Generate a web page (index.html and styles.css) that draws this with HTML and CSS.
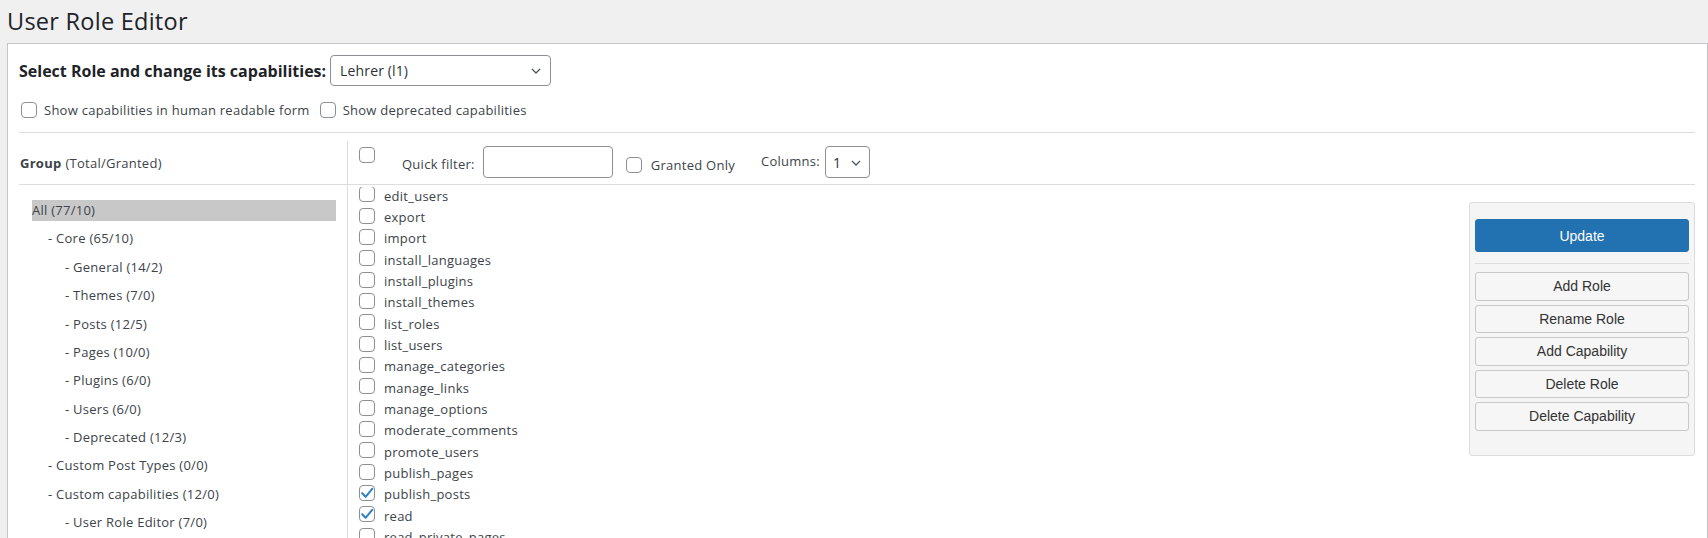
FILE: index.html
```html
<!DOCTYPE html>
<html lang="en">
<head>
<meta charset="utf-8">
<title>User Role Editor</title>
<link rel="stylesheet" href="styles.css">
</head>
<body>
<div class="wrap">
  <h1 class="page-title">User Role Editor</h1>
  <div class="box">
    <div class="role-row">
      <span class="role-label">Select Role and change its capabilities:</span>
      <select class="wp-select role-select"><option>Lehrer (l1)</option></select>
    </div>
    <div class="opts">
      <label class="opt"><input type="checkbox" class="cb"><span>Show capabilities in human readable form</span></label>
      <label class="opt"><input type="checkbox" class="cb"><span>Show deprecated capabilities</span></label>
    </div>
    <div class="sep"></div>
    <div class="editor">
      <div class="groups-head"><b>Group</b> (Total/Granted)</div>
      <div class="caps-head">
        <input type="checkbox" class="cb head-cb">
        <span class="qf-label">Quick filter:</span>
        <input type="text" class="qf-input">
        <input type="checkbox" class="cb granted-cb">
        <span class="granted-label">Granted Only</span>
        <span class="cols-label">Columns:</span>
        <select class="wp-select cols-select"><option>1</option></select>
      </div>
      <div class="groups">
        <div class="tree-item selected">All (77/10)</div>
        <div class="tree-item lvl1">- Core (65/10)</div>
        <div class="tree-item lvl2">- General (14/2)</div>
        <div class="tree-item lvl2">- Themes (7/0)</div>
        <div class="tree-item lvl2">- Posts (12/5)</div>
        <div class="tree-item lvl2">- Pages (10/0)</div>
        <div class="tree-item lvl2">- Plugins (6/0)</div>
        <div class="tree-item lvl2">- Users (6/0)</div>
        <div class="tree-item lvl2">- Deprecated (12/3)</div>
        <div class="tree-item lvl1">- Custom Post Types (0/0)</div>
        <div class="tree-item lvl1">- Custom capabilities (12/0)</div>
        <div class="tree-item lvl2">- User Role Editor (7/0)</div>
      </div>
      <div class="caps-body">
        <div class="caps-list">
          <div class="caps-inner">
            <label class="cap"><input type="checkbox" class="cb"><span>edit_users</span></label>
            <label class="cap"><input type="checkbox" class="cb"><span>export</span></label>
            <label class="cap"><input type="checkbox" class="cb"><span>import</span></label>
            <label class="cap"><input type="checkbox" class="cb"><span>install_languages</span></label>
            <label class="cap"><input type="checkbox" class="cb"><span>install_plugins</span></label>
            <label class="cap"><input type="checkbox" class="cb"><span>install_themes</span></label>
            <label class="cap"><input type="checkbox" class="cb"><span>list_roles</span></label>
            <label class="cap"><input type="checkbox" class="cb"><span>list_users</span></label>
            <label class="cap"><input type="checkbox" class="cb"><span>manage_categories</span></label>
            <label class="cap"><input type="checkbox" class="cb"><span>manage_links</span></label>
            <label class="cap"><input type="checkbox" class="cb"><span>manage_options</span></label>
            <label class="cap"><input type="checkbox" class="cb"><span>moderate_comments</span></label>
            <label class="cap"><input type="checkbox" class="cb"><span>promote_users</span></label>
            <label class="cap"><input type="checkbox" class="cb"><span>publish_pages</span></label>
            <label class="cap"><input type="checkbox" class="cb" checked><span>publish_posts</span></label>
            <label class="cap"><input type="checkbox" class="cb" checked><span>read</span></label>
            <label class="cap"><input type="checkbox" class="cb"><span>read_private_pages</span></label>
          </div>
        </div>
        <div class="side-panel">
          <button class="btn btn-primary">Update</button>
          <div class="panel-sep"></div>
          <button class="btn">Add Role</button>
          <button class="btn">Rename Role</button>
          <button class="btn">Add Capability</button>
          <button class="btn">Delete Role</button>
          <button class="btn">Delete Capability</button>
        </div>
      </div>
    </div>
  </div>
</div>
</body>
</html>
```
FILE: styles.css
```css
* { box-sizing: border-box; }
html, body { margin: 0; padding: 0; }
body {
  background: #f0f0f1;
  color: #3c434a;
  font-family: "Open Sans", "Noto Sans", sans-serif;
  font-size: 13px;
  letter-spacing: 0.02em;
}
.wrap {
  height: 100vh;
  overflow: hidden;
  padding-left: 7px;
}
.page-title {
  margin: 0;
  padding: 6px 0 0 0;
  height: 43px;
  font-size: 23.5px;
  font-weight: 400;
  line-height: 30px;
  color: #1d2327;
}
.box {
  background: #fff;
  border: 1px solid #c3c4c7;
  border-bottom: 0;
  padding: 11px 12px 0 11px;
}
.role-row {
  display: flex;
  align-items: center;
  height: 31px;
}
.role-label {
  font-weight: 700;
  font-size: 16px;
  letter-spacing: 0;
  color: #1d2327;
  margin-right: 4px;
}
.wp-select {
  appearance: none;
  -webkit-appearance: none;
  font-family: "Open Sans", "Noto Sans", sans-serif;
  font-size: 14px;
  letter-spacing: 0.01em;
  color: #2c3338;
  border: 1px solid #8c8f94;
  border-radius: 4px;
  background: #fff url("data:image/svg+xml;utf8,<svg xmlns='http://www.w3.org/2000/svg' viewBox='0 0 20 20'><path d='M5 7.5l5 5 5-5' fill='none' stroke='%2350575e' stroke-width='1.6'/></svg>") no-repeat right 6px top 55%;
  background-size: 16px 16px;
  margin: 0;
  outline: none;
}
.role-select {
  width: 221px;
  height: 31px;
  padding: 0 24px 0 9px;
}
.opts {
  display: flex;
  align-items: center;
  height: 24px;
  margin-top: 12px;
}
.opt {
  display: flex;
  align-items: center;
}
.opt .cb { margin-left: 2px; margin-right: 7px; }
.opt + .opt .cb { margin-left: 10px; }
.cb {
  appearance: none;
  -webkit-appearance: none;
  width: 16px;
  height: 16px;
  margin: 0;
  border: 1px solid #8c8f94;
  border-radius: 4px;
  background: #fff;
  flex: none;
}
.cb:checked {
  background: #fff url("data:image/svg+xml;utf8,<svg xmlns='http://www.w3.org/2000/svg' viewBox='0 0 16 16'><path d='M3.2 8.2l3.4 3.6 6.6-8' fill='none' stroke='%233582c4' stroke-width='2.1' stroke-linecap='round' stroke-linejoin='round'/></svg>") no-repeat center / 16px 16px;
}
.sep {
  height: 1px;
  background: #dcdcde;
  margin-top: 10px;
}
.editor {
  margin-top: 8px;
  display: grid;
  grid-template-columns: 329px 1fr;
  grid-template-rows: 44px auto;
}
.groups-head {
  border-right: 1px solid #dcdcde;
  border-bottom: 1px solid #dcdcde;
  padding-left: 1px;
  display: flex;
  align-items: center;
  padding-top: 1px;
}
.groups-head b { font-weight: 700; margin-right: 4px; }
.caps-head {
  border-bottom: 1px solid #dcdcde;
  display: flex;
  align-items: flex-start;
  padding-left: 11px;
}
.head-cb { margin-top: 6px; }
.qf-label { margin-top: 14px; margin-left: 27px; line-height: 18px; }
.qf-input {
  margin-top: 5px;
  margin-left: 8px;
  width: 130px;
  height: 32px;
  border: 1px solid #8c8f94;
  border-radius: 4px;
  background: #fff;
  padding: 0 8px;
  outline: none;
}
.granted-cb { margin-top: 16px; margin-left: 13px; }
.granted-label { margin-top: 15px; margin-left: 9px; line-height: 18px; }
.cols-label { margin-top: 11px; margin-left: 26px; line-height: 18px; }
.cols-select {
  margin-top: 5px;
  margin-left: 5px;
  width: 45px;
  height: 32px;
  padding: 0 0 0 7px;
  background-position: right 5px top 55%;
}
.groups {
  border-right: 1px solid #dcdcde;
  padding: 15px 11px 0 13px;
}
.tree-item {
  height: 20.7px;
  line-height: 20.7px;
  margin-bottom: 7.7px;
  white-space: nowrap;
}
.tree-item.selected { background: #c8c8c8; }
.tree-item.lvl1 { padding-left: 16px; }
.tree-item.lvl2 { padding-left: 33px; }
.caps-body {
  display: flex;
  align-items: flex-start;
  min-width: 0;
}
.caps-list {
  flex: 1;
  overflow: hidden;
  margin-top: 2px;
  padding-left: 11px;
}
.caps-inner { margin-top: -2px; }
.cap {
  display: flex;
  align-items: center;
  height: 21.35px;
  white-space: nowrap;
}
.cap .cb { margin-right: 9px; margin-top: -3px; }
.side-panel {
  width: 226px;
  margin-top: 17px;
  background: #f5f5f5;
  border: 1px solid #dcdcde;
  border-radius: 3px;
  padding: 16px 5px 20px 5px;
  display: flex;
  flex-direction: column;
}
.btn {
  font-family: "Liberation Sans", Arial, sans-serif;
  font-size: 14px;
  letter-spacing: 0;
  color: #333;
  background: #f6f6f6;
  border: 1px solid #c8c8c8;
  border-radius: 3px;
  height: 28.5px;
  margin: 0 0 4px 0;
  padding: 0;
}
.btn-primary {
  background: #2271b1;
  border-color: #2271b1;
  color: #fff;
  height: 33px;
  margin: 0;
}
.panel-sep {
  height: 1px;
  background: #dcdcde;
  margin: 11px 0 8px;
}
```
